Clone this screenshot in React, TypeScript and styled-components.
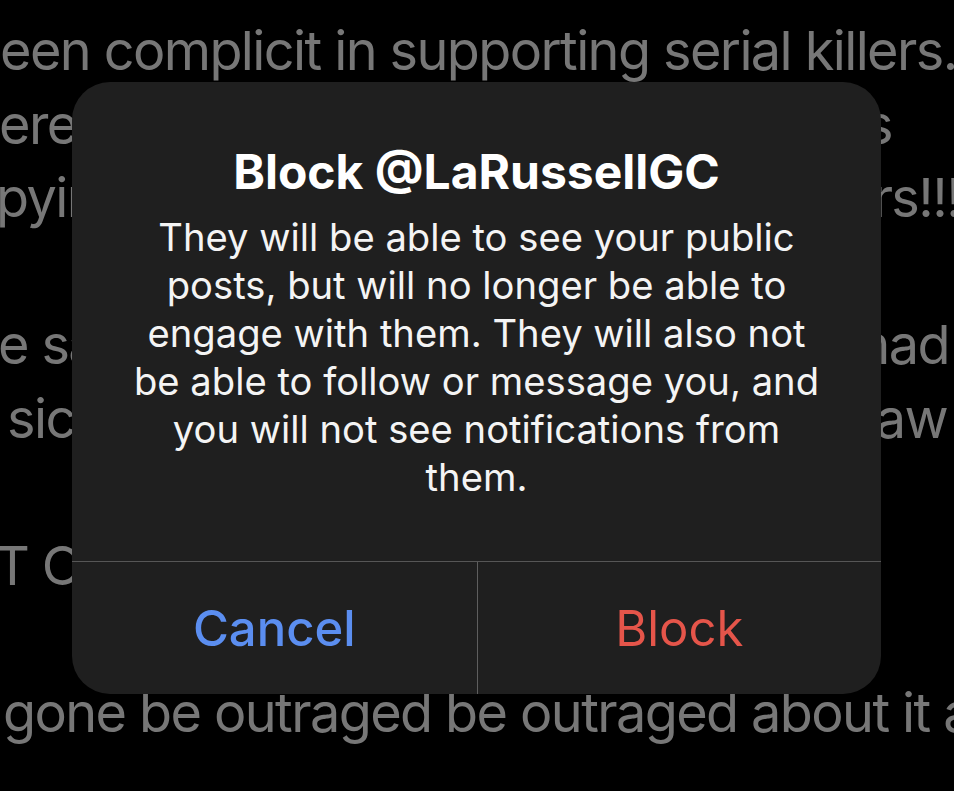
import styled, { createGlobalStyle } from 'styled-components';

const GlobalStyle = createGlobalStyle`
  html, body {
    margin: 0;
    padding: 0;
    background: #000;
  }
  body {
    font-family: Inter, "Noto Sans", "Liberation Sans", sans-serif;
  }
`;

interface Line {
  left?: string;
  right?: string;
  lead?: number;
  trail?: number;
}

// what shows of the post behind the alert, cut off by the alert and the screen edge
const lines: Line[] = [
  { left: 'een complicit in supporting serial killers.', lead: 0 },
  { left: 'eren', right: 's', lead: -1, trail: 62 },
  { left: 'pying', right: 'rs!!!!', lead: -4, trail: -20 },
  {},
  { left: 'e sa', right: 'mad', lead: -2, trail: 5 },
  { left: 'sick', right: 'law', lead: 7, trail: 7 },
  {},
  { left: 'T OF', lead: -5 },
  {},
  { left: 'gone be outraged be outraged about it all', lead: 3 },
];

export default function App() {
  return (
    <>
      <GlobalStyle />
      <Screen>
        <Post>
          {lines.map((line, i) => (
            <PostLine key={i}>
              <Fragment $lead={line.lead ?? 0}>{line.left ?? ''}</Fragment>
              {line.right && (
                <TailFragment $trail={line.trail ?? 0}>{line.right}</TailFragment>
              )}
            </PostLine>
          ))}
        </Post>

        <Alert role="alertdialog">
          <AlertBody>
            <Title>Block @LaRussellGC</Title>
            <Message>
              They will be able to see your public
              <br />
              posts, but will no longer be able to
              <br />
              engage with them. They will also not
              <br />
              be able to follow or message you, and
              <br />
              you will not see notifications from
              <br />
              them.
            </Message>
          </AlertBody>
          <Actions>
            <ActionButton type="button" $tone="cancel">
              Cancel
            </ActionButton>
            <ActionButton type="button" $tone="destructive" $divider>
              Block
            </ActionButton>
          </Actions>
        </Alert>
      </Screen>
    </>
  );
}

const Screen = styled.div`
  position: relative;
  width: 954px;
  height: 791px;
  overflow: hidden;
  background: #000;
`;

const Post = styled.div`
  display: flex;
  flex-direction: column;
  padding-top: 14px;
`;

const PostLine = styled.div`
  display: flex;
  justify-content: space-between;
  height: 73.5px;
  font-size: 54px;
  line-height: 73.5px;
  letter-spacing: -1.6px;
  color: #777777;
  white-space: nowrap;
`;

const Fragment = styled.span<{ $lead: number }>`
  margin-left: ${({ $lead }) => $lead}px;
`;

const TailFragment = styled.span<{ $trail: number }>`
  margin-right: ${({ $trail }) => $trail}px;
`;

const Alert = styled.div`
  position: absolute;
  left: 72px;
  top: 82px;
  width: 809px;
  height: 612px;
  display: flex;
  flex-direction: column;
  background: #1f1f1f;
  border-radius: 38px;
  overflow: hidden;
`;

const AlertBody = styled.div`
  flex: 1;
  display: flex;
  flex-direction: column;
  align-items: center;
  padding: 61px 30px 0;
  text-align: center;
`;

const Title = styled.h2`
  margin: 0;
  font-size: 48px;
  line-height: 58px;
  font-weight: 700;
  color: #ffffff;
`;

const Message = styled.p`
  margin: 12px 0 0;
  font-size: 38.2px;
  line-height: 48px;
  font-weight: 400;
  color: #f4f4f4;
  white-space: nowrap;
`;

const Actions = styled.div`
  display: grid;
  grid-template-columns: 1fr 1fr;
  height: 132px;
  border-top: 1px solid #565656;
`;

const ActionButton = styled.button<{
  $tone: 'cancel' | 'destructive';
  $divider?: boolean;
}>`
  display: flex;
  align-items: center;
  justify-content: center;
  padding: 0;
  margin: 0;
  background: transparent;
  border: none;
  border-left: ${({ $divider }) => ($divider ? '1px solid #5e5e5e' : 'none')};
  font-family: inherit;
  font-size: 49px;
  font-weight: ${({ $tone }) => ($tone === 'cancel' ? 500 : 400)};
  color: ${({ $tone }) => ($tone === 'cancel' ? '#5b8ef0' : '#e5554a')};
  cursor: pointer;
`;
